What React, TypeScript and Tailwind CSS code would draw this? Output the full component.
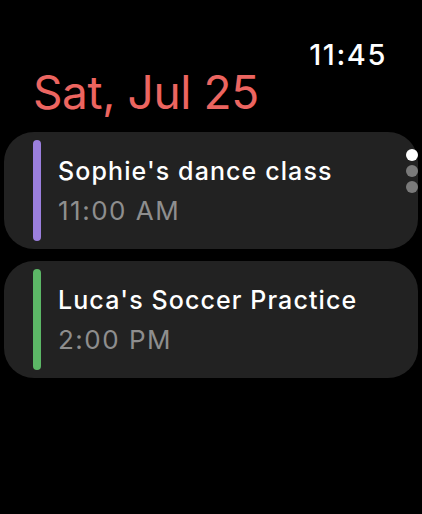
const events = [
  { title: "Sophie's dance class", time: "11:00 AM", color: "bg-[#9b7fdd]" },
  { title: "Luca's Soccer Practice", time: "2:00 PM", color: "bg-[#5cb766]" },
];

export default function App() {
  return (
    <div
      className="relative w-[422px] h-[514px] bg-black overflow-hidden"
      style={{ fontFamily: "Inter, 'Noto Sans', sans-serif" }}
    >
      <div className="flex justify-end pr-[35px] pt-[38px]">
        <span className="text-white text-[29px] leading-[34px] font-medium tracking-[1.6px]">
          11:45
        </span>
      </div>
      <div className="pl-[33px] mt-[-8px]">
        <span className="text-[#ec6560] text-[46px] leading-[56px] tracking-[-0.4px]">
          Sat, Jul 25
        </span>
      </div>
      <div className="mt-[12px] px-[4px] flex flex-col gap-[12px]">
        {events.map((e) => (
          <div
            key={e.title}
            className="h-[117px] rounded-[30px] bg-[#222222] flex py-[8px] pl-[29px]"
          >
            <div className={`w-[8px] rounded-full ${e.color}`} />
            <div className="pl-[17px] flex flex-col justify-center">
              <span className="text-white text-[25px] leading-[40px] font-medium tracking-[1.1px]">
                {e.title}
              </span>
              <span className="text-[#8e8e8e] text-[26px] leading-[40px] tracking-[1.5px]">
                {e.time}
              </span>
            </div>
          </div>
        ))}
      </div>
      <div className="absolute left-[406px] top-[149px] flex flex-col gap-[4px]">
        <div className="w-[12px] h-[12px] rounded-full bg-white" />
        <div className="w-[12px] h-[12px] rounded-full bg-[#7a7a7a]" />
        <div className="w-[12px] h-[12px] rounded-full bg-[#7a7a7a]" />
      </div>
    </div>
  );
}
